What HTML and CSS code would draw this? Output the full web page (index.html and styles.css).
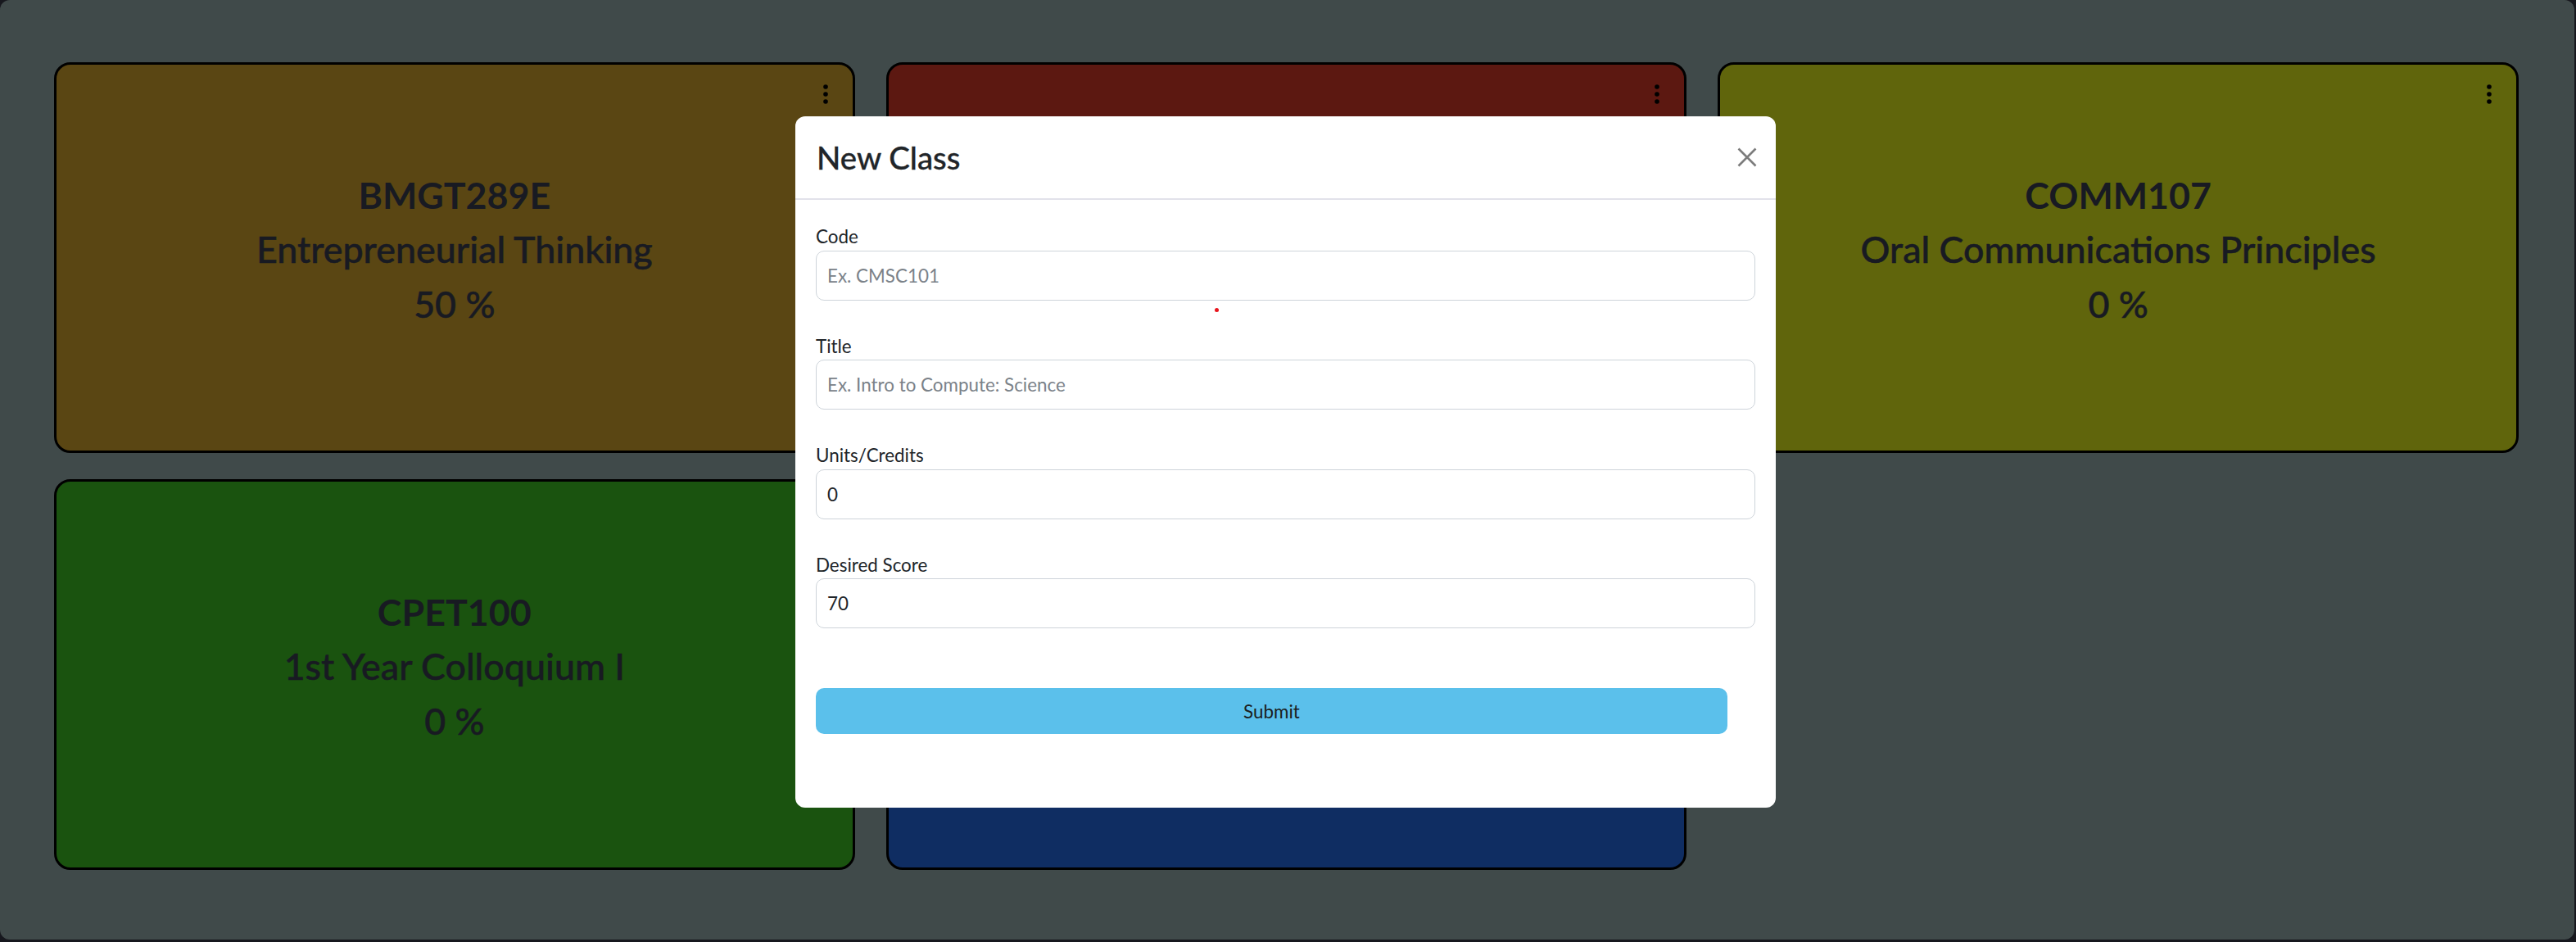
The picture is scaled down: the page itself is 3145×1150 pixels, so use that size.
FILE: index.html
```html
<!DOCTYPE html>
<html lang="en">
<head>
<meta charset="utf-8">
<title>Classes</title>
<link rel="stylesheet" href="styles.css">
</head>
<body>
<div class="page">
  <div class="grid">
    <div class="card c1">
      <svg class="kebab" width="6" height="24" viewBox="0 0 6 24"><circle cx="3" cy="3" r="2.8"/><circle cx="3" cy="12" r="2.8"/><circle cx="3" cy="21" r="2.8"/></svg>
      <h3 class="code">BMGT289E</h3>
      <h3 class="name">Entrepreneurial Thinking</h3>
      <h3 class="pct">50 %</h3>
    </div>
    <div class="card c2">
      <svg class="kebab" width="6" height="24" viewBox="0 0 6 24"><circle cx="3" cy="3" r="2.8"/><circle cx="3" cy="12" r="2.8"/><circle cx="3" cy="21" r="2.8"/></svg>
    </div>
    <div class="card c3">
      <svg class="kebab" width="6" height="24" viewBox="0 0 6 24"><circle cx="3" cy="3" r="2.8"/><circle cx="3" cy="12" r="2.8"/><circle cx="3" cy="21" r="2.8"/></svg>
      <h3 class="code">COMM107</h3>
      <h3 class="name">Oral Communications Principles</h3>
      <h3 class="pct">0 %</h3>
    </div>
    <div class="card c4">
      <svg class="kebab" width="6" height="24" viewBox="0 0 6 24"><circle cx="3" cy="3" r="2.8"/><circle cx="3" cy="12" r="2.8"/><circle cx="3" cy="21" r="2.8"/></svg>
      <h3 class="code">CPET100</h3>
      <h3 class="name">1st Year Colloquium I</h3>
      <h3 class="pct">0 %</h3>
    </div>
    <div class="card c5">
      <svg class="kebab" width="6" height="24" viewBox="0 0 6 24"><circle cx="3" cy="3" r="2.8"/><circle cx="3" cy="12" r="2.8"/><circle cx="3" cy="21" r="2.8"/></svg>
    </div>
  </div>

  <div class="overlay">
    <div class="modal">
      <div class="modal-header">
        <h4 class="modal-title">New Class</h4>
        <svg class="close" width="24" height="24" viewBox="0 0 24 24"><path d="M1.5 1.5 L22.5 22.5 M22.5 1.5 L1.5 22.5"/></svg>
      </div>
      <div class="modal-body">
        <span class="dot"></span>
        <label class="label">Code</label>
        <input class="field" type="text" placeholder="Ex. CMSC101">
        <label class="label">Title</label>
        <input class="field" type="text" placeholder="Ex. Intro to Compute: Science">
        <label class="label">Units/Credits</label>
        <input class="field" type="text" value="0">
        <label class="label">Desired Score</label>
        <input class="field" type="text" value="70">
        <button class="submit" type="button">Submit</button>
      </div>
    </div>
  </div>
</div>
</body>
</html>
```

FILE: styles.css
```css
* { box-sizing: border-box; }

html, body {
  margin: 0;
  padding: 0;
  background: #17181e;
  width: 3145px;
  height: 1150px;
  overflow: hidden;
  font-family: Lato, "Liberation Sans", sans-serif;
}

.page {
  position: relative;
  width: 3143px;
  height: 1147px;
  background: #404a4a;
  border-radius: 12px;
}

.grid {
  display: grid;
  grid-template-columns: repeat(3, 1fr);
  grid-auto-rows: 477px;
  column-gap: 38px;
  row-gap: 32px;
  padding: 76px 68px 0 66px;
}

.card {
  position: relative;
  border: 3px solid #000;
  border-radius: 20px;
  display: flex;
  flex-direction: column;
  align-items: center;
  justify-content: center;
  padding-bottom: 6px;
  color: #181a22;
}

.c1 { background: #5a4613; }
.c2 { background: #5c1811; }
.c3 { background: #60650c; }
.c4 { background: #1a530f; }
.c5 { background: #0f2d62; }

.kebab {
  position: absolute;
  top: 24px;
  right: 30px;
  fill: #000;
}

.card h3 {
  margin: 0 0 12.8px 0;
  font-size: 44.8px;
  line-height: 1.2;
  text-align: center;
}

.code { font-weight: 700; }
.name, .pct {
  font-weight: 500;
  -webkit-text-stroke: 0.5px #181a22;
}

.overlay {
  position: absolute;
  inset: 0;
}

.modal {
  position: relative;
  margin: 142px 0 0 971px;
  width: 1197px;
  background: #fff;
  border-radius: 12px;
}

.modal-header {
  height: 102px;
  display: flex;
  align-items: center;
  justify-content: space-between;
  padding: 0 23px 0 26px;
  border-bottom: 2px solid #e2e2ea;
}

.modal-title {
  margin: 0;
  font-size: 38.4px;
  font-weight: 500;
  color: #212529;
  line-height: 1.2;
  -webkit-text-stroke: 0.3px #212529;
}

.close {
  stroke: #7c7c7c;
  stroke-width: 2.6;
  fill: none;
}

.modal-body {
  position: relative;
  padding: 28px 25px 26px 25px;
}

.dot {
  position: absolute;
  left: 512px;
  top: 132px;
  width: 5px;
  height: 5px;
  border-radius: 50%;
  background: #e8141c;
}

.label {
  display: block;
  font-size: 22.4px;
  line-height: 33.6px;
  color: #212529;
}

.field {
  display: block;
  width: 100%;
  height: 61px;
  margin: 0 0 39px 0;
  padding: 0 13px;
  border: 1.5px solid #ced4da;
  border-radius: 10px;
  font-family: Lato, "Liberation Sans", sans-serif;
  font-size: 22.4px;
  color: #212529;
  background: #fff;
}

.field::placeholder {
  color: #7b8289;
}

.submit {
  display: block;
  width: calc(100% - 34px);
  height: 56px;
  margin: 73px 0 64px 0;
  border: none;
  border-radius: 10px;
  background: #5bc0eb;
  font-family: Lato, "Liberation Sans", sans-serif;
  font-size: 22.4px;
  color: #1b1e21;
}
```
